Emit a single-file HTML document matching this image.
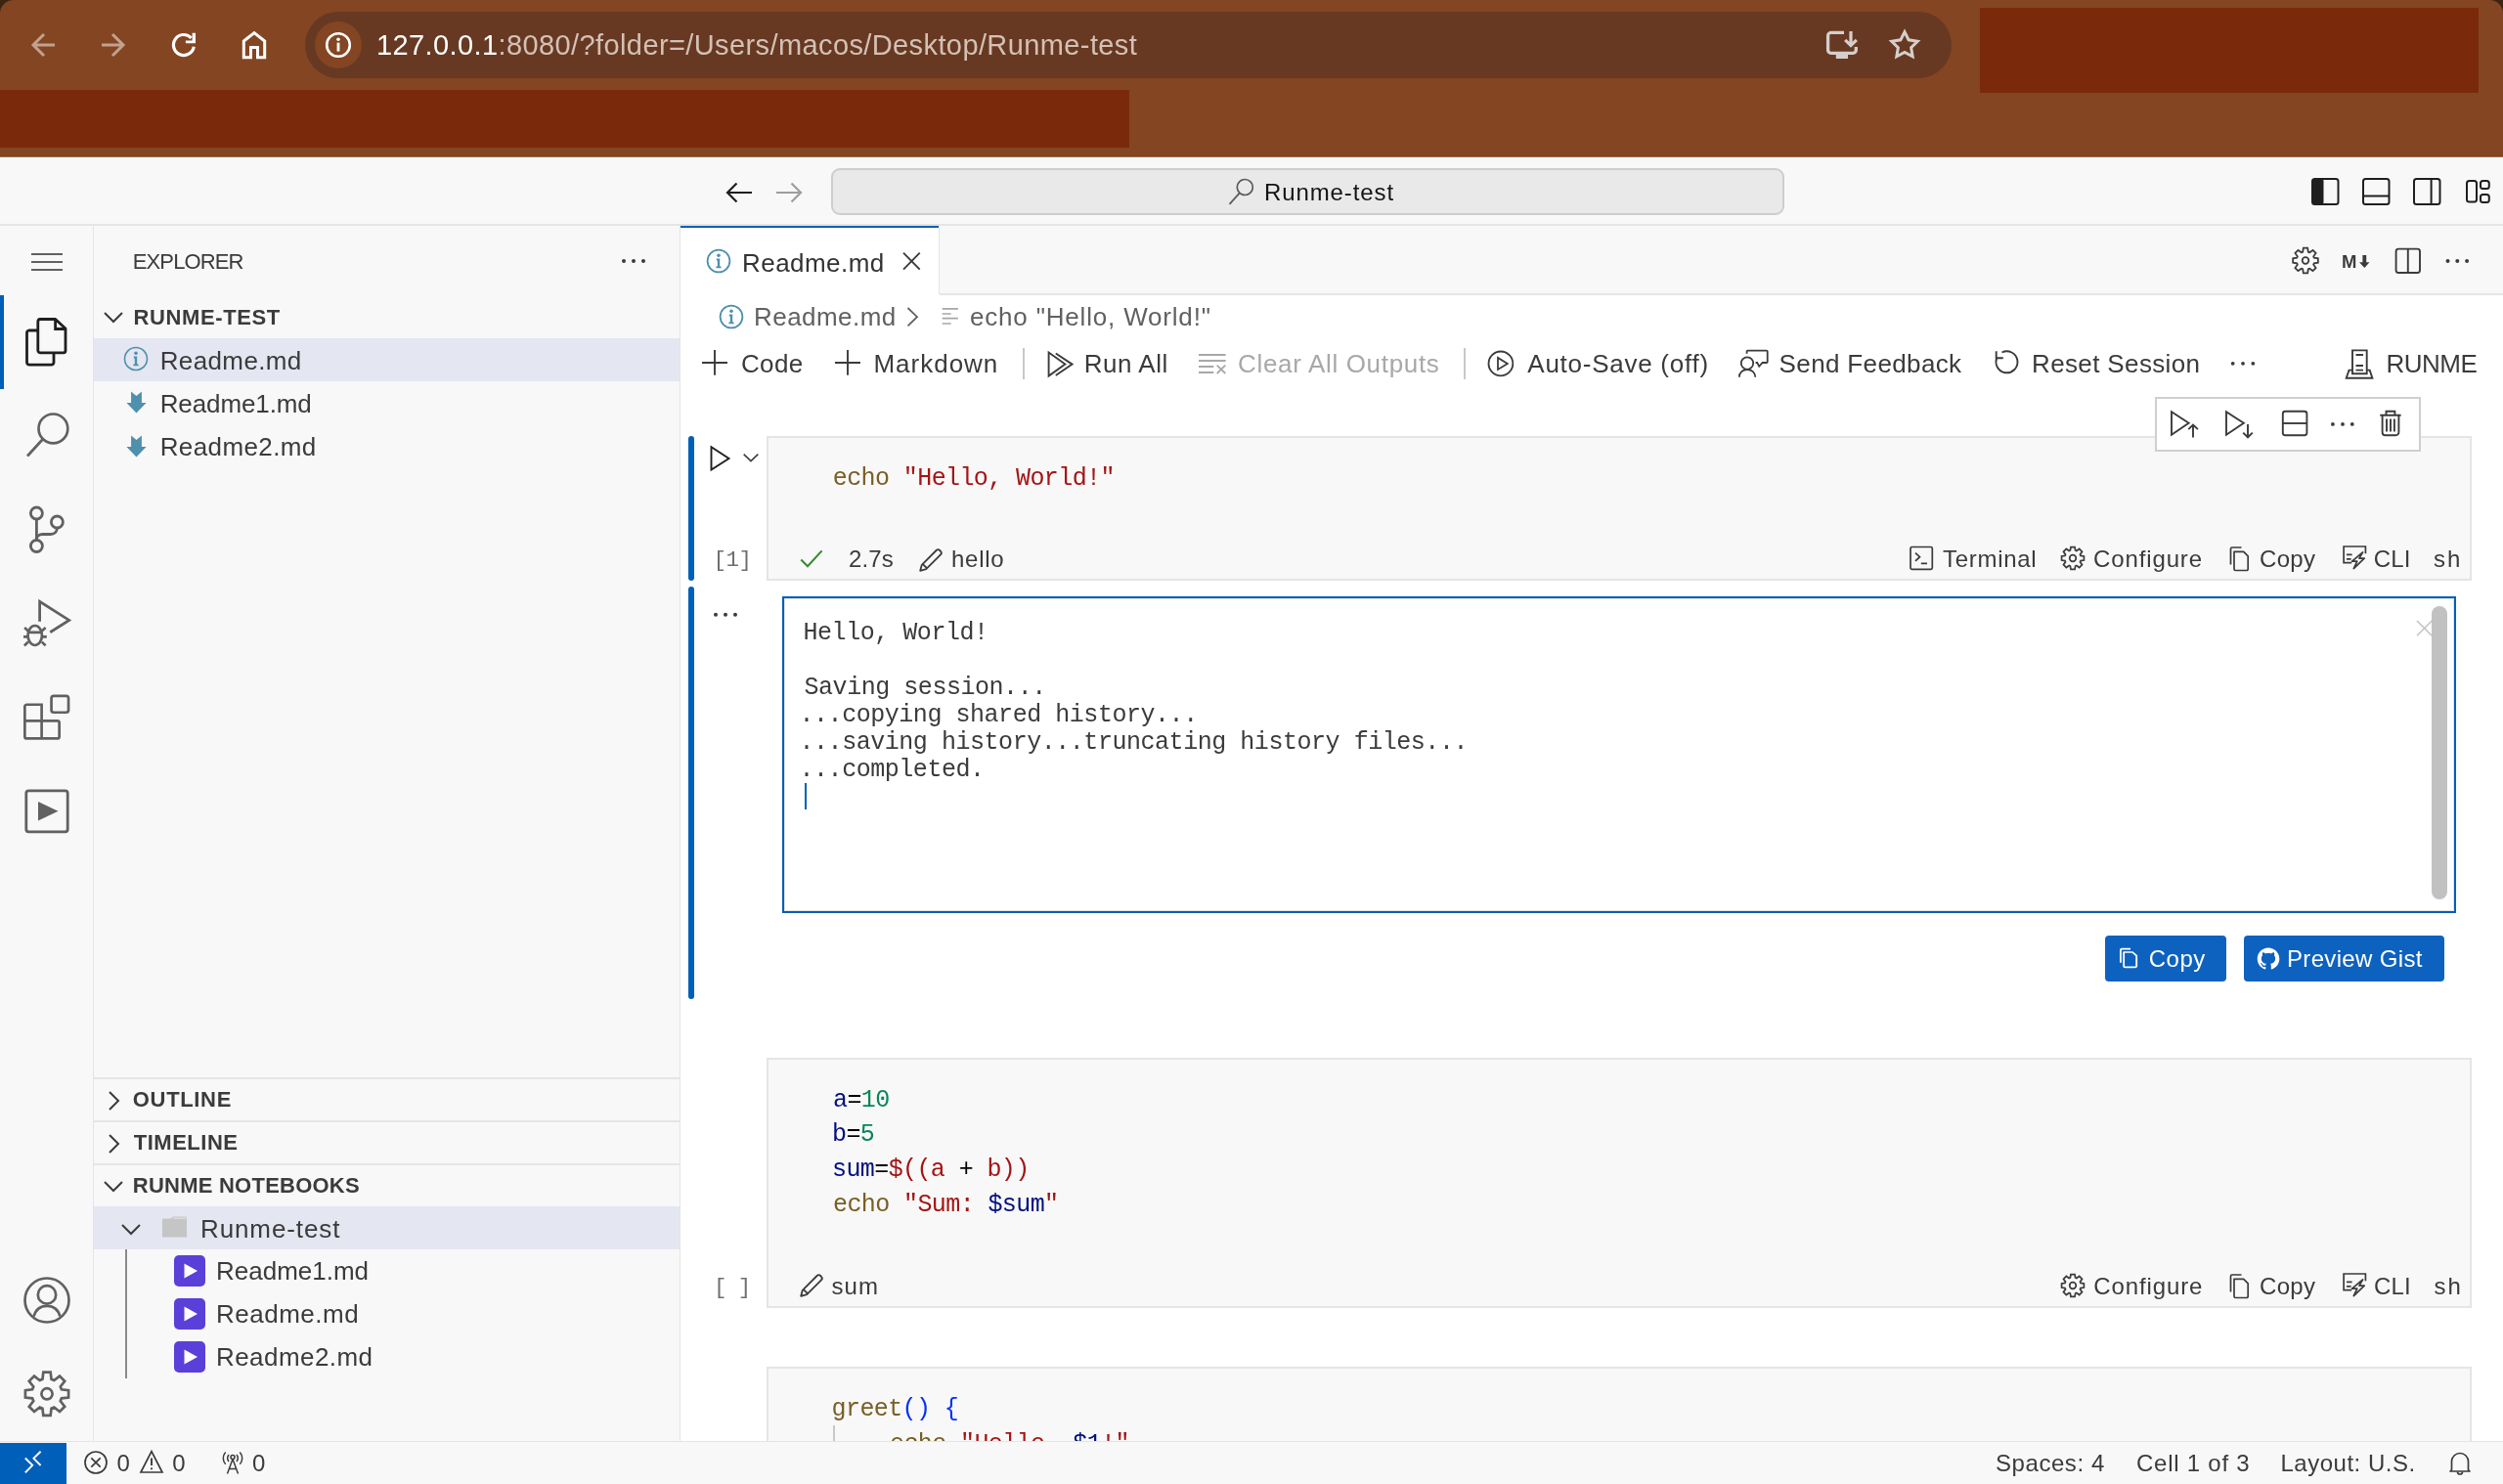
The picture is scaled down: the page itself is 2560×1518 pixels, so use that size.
<!DOCTYPE html>
<html><head><meta charset="utf-8"><style>
html,body{margin:0;padding:0;width:2560px;height:1518px;overflow:hidden;background:#fff}
#r{position:absolute;left:0;top:0;width:2560px;height:1518px;will-change:transform}
#r>div,#r>svg{position:absolute}
</style></head><body><div id="r">
<div style="left:0px;top:0px;width:2560px;height:161px;background:#3a2414;"></div>
<div style="left:0px;top:0px;width:2560px;height:161px;background:#844522;border-radius:14px 14px 0 0"></div>
<div style="left:0px;top:159px;width:2560px;height:1px;background:#7a4320;"></div>
<div style="left:0px;top:160px;width:2560px;height:1px;background:#9f6f55;"></div>
<div style="left:312px;top:12px;width:1684px;height:68px;background:#673922;border-radius:34px"></div>
<div style="left:322px;top:22px;width:48px;height:48px;background:#844522;border-radius:50%"></div>
<div style="left:2025px;top:8px;width:510px;height:87px;background:#7a2a0b;"></div>
<div style="left:0px;top:92px;width:1155px;height:59px;background:#7a2a0b;"></div>
<div style="left:0px;top:161px;width:2560px;height:70px;background:#f8f8f8;"></div>
<div style="left:0px;top:161px;width:2560px;height:1px;background:#ffffff;"></div>
<div style="left:0px;top:229px;width:2560px;height:2px;background:#e5e5e5;"></div>
<div style="left:850px;top:172px;width:975px;height:48px;background:#e9e9e9;box-sizing:border-box;border:2px solid #cdcdcd;border-radius:9px"></div>
<div style="left:0px;top:231px;width:96px;height:1244px;background:#f8f8f8;"></div>
<div style="left:95px;top:231px;width:1px;height:1244px;background:#e5e5e5;"></div>
<div style="left:0px;top:302px;width:4px;height:96px;background:#005fb8;"></div>
<div style="left:96px;top:231px;width:599px;height:1244px;background:#f8f8f8;"></div>
<div style="left:695px;top:231px;width:1px;height:1244px;background:#e5e5e5;"></div>
<div style="left:96px;top:346px;width:599px;height:44px;background:#e4e6f1;"></div>
<div style="left:96px;top:1102px;width:599px;height:2px;background:#e5e5e5;"></div>
<div style="left:96px;top:1146px;width:599px;height:2px;background:#e5e5e5;"></div>
<div style="left:96px;top:1190px;width:599px;height:2px;background:#e5e5e5;"></div>
<div style="left:96px;top:1234px;width:599px;height:44px;background:#e4e6f1;"></div>
<div style="left:128px;top:1278px;width:2px;height:132px;background:#8a8a8a;"></div>
<div style="left:696px;top:231px;width:1864px;height:1244px;background:#ffffff;"></div>
<div style="left:696px;top:231px;width:1864px;height:70px;background:#f8f8f8;"></div>
<div style="left:696px;top:300px;width:1864px;height:2px;background:#e5e5e5;"></div>
<div style="left:696px;top:231px;width:265px;height:71px;background:#ffffff;"></div>
<div style="left:696px;top:231px;width:265px;height:2px;background:#005fb8;"></div>
<div style="left:960px;top:231px;width:1px;height:70px;background:#e5e5e5;"></div>
<div style="left:0px;top:1474px;width:2560px;height:44px;background:#f8f8f8;z-index:5"></div>
<div style="left:0px;top:1474px;width:2560px;height:1px;background:#e5e5e5;z-index:5"></div>
<div style="left:0px;top:1476px;width:68px;height:42px;background:#005fb8;z-index:5"></div>
<div style="left:784px;top:446px;width:1744px;height:148px;box-sizing:border-box;background:#f8f8f8;border:2px solid #e5e5e5"></div>
<div style="left:704px;top:446px;width:6px;height:148px;background:#005fb8;border-radius:3px"></div>
<div style="left:704px;top:600px;width:6px;height:422px;background:#005fb8;border-radius:3px"></div>
<div style="left:800px;top:610px;width:1712px;height:324px;box-sizing:border-box;background:#fff;border:2px solid #005fb8"></div>
<div style="left:802px;top:612px;width:1708px;height:320px;box-sizing:border-box;border:1px solid #e3e3e3"></div>
<div style="left:2204px;top:406px;width:272px;height:56px;box-sizing:border-box;background:#fff;border:2px solid #cfcfcf"></div>
<div style="left:2487px;top:620px;width:16px;height:300px;background:#c1c1c1;border-radius:8px"></div>
<div style="left:2153px;top:957px;width:124px;height:47px;background:#0d62bf;border-radius:4px"></div>
<div style="left:2295px;top:957px;width:205px;height:47px;background:#0d62bf;border-radius:4px"></div>
<div style="left:784px;top:1082px;width:1744px;height:256px;box-sizing:border-box;background:#f8f8f8;border:2px solid #e5e5e5"></div>
<div style="left:784px;top:1398px;width:1744px;height:100px;box-sizing:border-box;background:#f8f8f8;border:2px solid #e5e5e5"></div>
<div style="left:852px;top:1458px;width:2px;height:20px;background:#c8c8c8;"></div>
<div style="left:823px;top:801px;width:2px;height:27px;background:#005fb8;"></div>
<svg style="left:28px;top:30px;" width="32" height="32" viewBox="0 0 32 32" fill="none"><path d="M6 16H28M17 5L6 16L17 27" stroke="#c1a290" stroke-width="3"/></svg>
<svg style="left:100px;top:30px;" width="32" height="32" viewBox="0 0 32 32" fill="none"><path d="M26 16H4M15 5L26 16L15 27" stroke="#c1a290" stroke-width="3"/></svg>
<svg style="left:172px;top:30px;" width="32" height="32" viewBox="0 0 32 32" fill="none"><path d="M26.3 17.8A10.5 10.5 0 1 1 23.6 8.8" stroke="#fff" stroke-width="3.2" fill="none"/><path d="M24.6 3.8H28V14.2H17.9V11.6H24.6Z" fill="#fff"/></svg>
<svg style="left:244px;top:30px;" width="32" height="32" viewBox="0 0 32 32" fill="none"><path d="M5.3 28.8V12L16 3.6L26.7 12V28.8H19.5V18.4H12.5V28.8Z" stroke="#fff" stroke-width="3" stroke-linejoin="miter" fill="none"/></svg>
<svg style="left:330px;top:30px;" width="32" height="32" viewBox="0 0 32 32" fill="none"><circle cx="16" cy="16" r="11.8" stroke="#fff" stroke-width="2.6"/><circle cx="16" cy="10.2" r="1.8" fill="#fff"/><rect x="14.6" y="13.6" width="2.8" height="9" fill="#fff"/></svg>
<svg style="left:1855px;top:20px;" width="60" height="50" viewBox="0 0 60 50" fill="none"><path d="M31 13.4H17.5A3 3 0 0 0 14.6 16.4V31.3A3 3 0 0 0 17.6 34.3H40.3A3 3 0 0 0 43.3 31.3V28" stroke="#d5cfcc" stroke-width="3.3" fill="none"/><rect x="22.8" y="34" width="12.2" height="6" fill="#d5cfcc"/><path d="M38 12V26M32.2 20.8L38 26.6L43.8 20.8" stroke="#d5cfcc" stroke-width="3.2" fill="none"/></svg>
<svg style="left:1925px;top:20px;" width="50" height="50" viewBox="0 0 50 50" fill="none"><path d="M23.00,12.60 L27.11,20.84 L36.22,22.20 L29.66,28.66 L31.17,37.75 L23.00,33.50 L14.83,37.75 L16.34,28.66 L9.78,22.20 L18.89,20.84 Z" stroke="#d5cfcc" stroke-width="3" stroke-linejoin="miter" fill="none"/></svg>
<svg style="left:738px;top:182px;" width="34" height="30" viewBox="0 0 34 30" fill="none"><path d="M6 15H31M15.5 5.5L6 15L15.5 24.5" stroke="#1f1f1f" stroke-width="2.2"/></svg>
<svg style="left:790px;top:182px;" width="34" height="30" viewBox="0 0 34 30" fill="none"><path d="M29 15H4M19.5 5.5L29 15L19.5 24.5" stroke="#9d9d9d" stroke-width="2.2"/></svg>
<svg style="left:1252px;top:178px;" width="36" height="36" viewBox="0 0 36 36" fill="none"><circle cx="21.3" cy="13.5" r="8" stroke="#5a5a5a" stroke-width="1.7"/><path d="M15.6 19.6L5.5 30.9" stroke="#5a5a5a" stroke-width="1.7"/></svg>
<svg style="left:2362px;top:180px;" width="32" height="32" viewBox="0 0 32 32" fill="none"><rect x="3" y="3" width="26.5" height="26" rx="2.5" stroke="#1f1f1f" stroke-width="2"/><rect x="3" y="3" width="11.5" height="26" rx="2" fill="#1f1f1f"/></svg>
<svg style="left:2414px;top:180px;" width="32" height="32" viewBox="0 0 32 32" fill="none"><rect x="3" y="3" width="26.5" height="26" rx="2.5" stroke="#1f1f1f" stroke-width="2"/><path d="M3 20.5H29.5" stroke="#1f1f1f" stroke-width="2"/></svg>
<svg style="left:2466px;top:180px;" width="32" height="32" viewBox="0 0 32 32" fill="none"><rect x="3" y="3" width="26.5" height="26" rx="2.5" stroke="#1f1f1f" stroke-width="2"/><path d="M20.6 3V29" stroke="#1f1f1f" stroke-width="2"/></svg>
<svg style="left:2520px;top:180px;" width="32" height="32" viewBox="0 0 32 32" fill="none"><rect x="3" y="5" width="10" height="21.5" rx="2.5" stroke="#1f1f1f" stroke-width="2"/><rect x="17" y="5" width="8.8" height="8" rx="2.5" stroke="#1f1f1f" stroke-width="2"/><rect x="17" y="19" width="8.8" height="8" rx="2.5" stroke="#1f1f1f" stroke-width="2"/></svg>
<svg style="left:28px;top:252px;" width="40" height="32" viewBox="0 0 40 32" fill="none"><path d="M4 8H36M4 16H36M4 24H36" stroke="#616161" stroke-width="2"/></svg>
<svg style="left:22px;top:322px;" width="50" height="56" viewBox="0 0 50 56" fill="none"><path d="M16.6 16H7.5A2.5 2.5 0 0 0 5.5 18.5V48.7A2.5 2.5 0 0 0 8 51.2H30.5A2.5 2.5 0 0 0 33 48.7V39" stroke="#1f1f1f" stroke-width="2.8" fill="none"/><path d="M19 4.5H34.5L45 14V36.8A2 2 0 0 1 43 38.8H19A2.5 2.5 0 0 1 16.8 36.5V6.8A2.5 2.5 0 0 1 19 4.5Z" stroke="#1f1f1f" stroke-width="2.8" fill="none"/><path d="M34.6 5V14.5H44" stroke="#1f1f1f" stroke-width="2.8" fill="none"/></svg>
<svg style="left:22px;top:418px;" width="52" height="56" viewBox="0 0 52 56" fill="none"><circle cx="32.4" cy="20.4" r="14.9" stroke="#616161" stroke-width="2.7"/><path d="M22 31L6 48.5" stroke="#616161" stroke-width="2.7"/></svg>
<svg style="left:22px;top:508px;" width="52" height="60" viewBox="0 0 52 60" fill="none"><circle cx="15.4" cy="17" r="6" stroke="#616161" stroke-width="2.8"/><circle cx="36.4" cy="26" r="6" stroke="#616161" stroke-width="2.8"/><circle cx="15.4" cy="50.5" r="6" stroke="#616161" stroke-width="2.8"/><path d="M15.4 23V44.5M15.4 44C15.4 40.5 18 38.5 21.5 38.5H29.8C33.6 38.5 36.4 36 36.4 32" stroke="#616161" stroke-width="2.8" fill="none"/></svg>
<svg style="left:22px;top:608px;" width="56" height="60" viewBox="0 0 56 60" fill="none"><path d="M18.6 27.8V7.3L48.7 26.4L29.3 38.7" stroke="#616161" stroke-width="2.8" fill="none" stroke-linejoin="miter"/><ellipse cx="13.75" cy="42" rx="7.2" ry="10" stroke="#616161" stroke-width="2.7"/><path d="M7.5 38.9H20M2 43.4H6.9M20.6 43.4H25.8M3.1 34L6.9 37.4M24.6 34L20.8 37.4M2.9 52.4L6.9 48.6M24.6 52.4L20.8 48.6" stroke="#616161" stroke-width="2.7"/></svg>
<svg style="left:20px;top:704px;" width="56" height="60" viewBox="0 0 56 60" fill="none"><path d="M5.35 18.75A2 2 0 0 1 7.35 16.75H22.6V33.4H38.65A2 2 0 0 1 40.65 35.4V49.45A2 2 0 0 1 38.65 51.45H7.35A2 2 0 0 1 5.35 49.45Z M5.35 33.4H22.6V51.45" stroke="#616161" stroke-width="2.7" fill="none"/><rect x="32.55" y="7.85" width="17.5" height="16.9" rx="2.5" stroke="#616161" stroke-width="2.7"/></svg>
<svg style="left:22px;top:804px;" width="52" height="52" viewBox="0 0 52 52" fill="none"><rect x="4.8" y="4.8" width="42.4" height="42" rx="2.5" stroke="#616161" stroke-width="2.8"/><path d="M17 16L37.5 25.8L17 35.5Z" fill="#616161"/></svg>
<svg style="left:22px;top:1304px;" width="52" height="52" viewBox="0 0 52 52" fill="none"><circle cx="26" cy="26" r="22.5" stroke="#616161" stroke-width="2.7"/><circle cx="26" cy="20.4" r="9.2" stroke="#616161" stroke-width="2.7"/><path d="M12.6 42.5C14.5 35.5 19.5 31.8 26 31.8C32.5 31.8 37.5 35.5 39.4 42.5" stroke="#616161" stroke-width="2.7" fill="none"/></svg>
<svg style="left:22px;top:1400px;" width="52" height="52" viewBox="0 0 52 52" fill="none"><path d="M21.47,10.87 L22.32,3.70 L29.68,3.70 L30.53,10.87 L33.35,12.04 L39.02,7.58 L44.22,12.78 L39.76,18.45 L40.93,21.27 L48.10,22.12 L48.10,29.48 L40.93,30.33 L39.76,33.15 L44.22,38.82 L39.02,44.02 L33.35,39.56 L30.53,40.73 L29.68,47.90 L22.32,47.90 L21.47,40.73 L18.65,39.56 L12.98,44.02 L7.78,38.82 L12.24,33.15 L11.07,30.33 L3.90,29.48 L3.90,22.12 L11.07,21.27 L12.24,18.45 L7.78,12.78 L12.98,7.58 L18.65,12.04 Z" stroke="#616161" stroke-width="2.7" fill="none" stroke-linejoin="miter"/><circle cx="26" cy="25.8" r="5.6" stroke="#616161" stroke-width="2.7"/></svg>
<svg style="left:620px;top:255px;" width="50" height="24" viewBox="0 0 50 24" fill="none"><circle cx="18" cy="12" r="2" fill="#3b3b3b"/><circle cx="28" cy="12" r="2" fill="#3b3b3b"/><circle cx="38" cy="12" r="2" fill="#3b3b3b"/></svg>
<svg style="left:104px;top:317px;" width="24" height="16" viewBox="0 0 24 16" fill="none"><path d="M3 3L12 12L21 3" stroke="#3b3b3b" stroke-width="2" fill="none"/></svg>
<svg style="left:109px;top:1114px;" width="16" height="24" viewBox="0 0 16 24" fill="none"><path d="M3 3L12 12L3 21" stroke="#3b3b3b" stroke-width="2" fill="none"/></svg>
<svg style="left:109px;top:1158px;" width="16" height="24" viewBox="0 0 16 24" fill="none"><path d="M3 3L12 12L3 21" stroke="#3b3b3b" stroke-width="2" fill="none"/></svg>
<svg style="left:104px;top:1206px;" width="24" height="16" viewBox="0 0 24 16" fill="none"><path d="M3 3L12 12L21 3" stroke="#3b3b3b" stroke-width="2" fill="none"/></svg>
<svg style="left:122px;top:1250px;" width="24" height="16" viewBox="0 0 24 16" fill="none"><path d="M3 3L12 12L21 3" stroke="#3b3b3b" stroke-width="2" fill="none"/></svg>
<svg style="left:123.4px;top:351.4px;" width="32" height="32" viewBox="0 0 32 32" fill="none"><circle cx="16" cy="16" r="11.5" stroke="#4e90ae" stroke-width="1.6"/><circle cx="16" cy="10.3" r="1.8" fill="#4e90ae"/><path d="M13.8 13.6H17.2V21.4H18.6V23.2H13.4V21.4H14.8V15.4H13.8Z" fill="#4e90ae"/></svg>
<svg style="left:128.8px;top:400.4px;" width="22" height="24" viewBox="0 0 22 24" fill="none"><path d="M5.1 0.4L10.5 5L15.9 0.4V12H20.6L10.5 22.6L0.4 12H5.1Z" fill="#4e90ae"/></svg>
<svg style="left:128.8px;top:444.6px;" width="22" height="24" viewBox="0 0 22 24" fill="none"><path d="M5.1 0.4L10.5 5L15.9 0.4V12H20.6L10.5 22.6L0.4 12H5.1Z" fill="#4e90ae"/></svg>
<svg style="left:164px;top:1242px;" width="30" height="26" viewBox="0 0 30 26" fill="none"><path d="M2 5.5A1 1 0 0 1 3 4.5H11L13 2.5H26A1 1 0 0 1 27 3.5V23.5H2Z" fill="#c5c5c5"/><path d="M13.5 4.2H26.5" stroke="#e8e8e8" stroke-width="1"/></svg>
<svg style="left:177.8px;top:1284px;" width="32" height="32" viewBox="0 0 32 32" fill="none"><rect x="0" y="0" width="32" height="32" rx="5" fill="#5b3fd9"/><path d="M10.5 8.5L24 16L10.5 23.5Z" fill="#fff"/></svg>
<svg style="left:177.8px;top:1328px;" width="32" height="32" viewBox="0 0 32 32" fill="none"><rect x="0" y="0" width="32" height="32" rx="5" fill="#5b3fd9"/><path d="M10.5 8.5L24 16L10.5 23.5Z" fill="#fff"/></svg>
<svg style="left:177.8px;top:1372px;" width="32" height="32" viewBox="0 0 32 32" fill="none"><rect x="0" y="0" width="32" height="32" rx="5" fill="#5b3fd9"/><path d="M10.5 8.5L24 16L10.5 23.5Z" fill="#fff"/></svg>
<div style="left:385.00px;top:31.65px;font:29px/29px 'Liberation Sans', sans-serif;letter-spacing:0.396px;white-space:pre;"><span style="color:#ffffff">127.0.0.1</span><span style="color:#d4c0b5">:8080/?folder=/Users/macos/Desktop/Runme-test</span></div>
<div style="left:1293.00px;top:184.68px;font:24px/24px 'Liberation Sans', sans-serif;color:#141414;letter-spacing:0.889px;white-space:pre;">Runme-test</div>
<div style="left:135.70px;top:256.88px;font:22px/22px 'Liberation Sans', sans-serif;color:#3b3b3b;letter-spacing:-0.857px;white-space:pre;">EXPLORER</div>
<div style="left:136.60px;top:313.88px;font:22px/22px 'Liberation Sans', sans-serif;font-weight:700;color:#3b3b3b;letter-spacing:0.600px;white-space:pre;">RUNME-TEST</div>
<div style="left:163.70px;top:355.69px;font:26px/26px 'Liberation Sans', sans-serif;color:#3b3b3b;letter-spacing:0.375px;white-space:pre;">Readme.md</div>
<div style="left:163.70px;top:399.69px;font:26px/26px 'Liberation Sans', sans-serif;color:#3b3b3b;letter-spacing:-0.111px;white-space:pre;">Readme1.md</div>
<div style="left:163.70px;top:443.69px;font:26px/26px 'Liberation Sans', sans-serif;color:#3b3b3b;letter-spacing:0.389px;white-space:pre;">Readme2.md</div>
<div style="left:135.80px;top:1114.38px;font:22px/22px 'Liberation Sans', sans-serif;font-weight:700;color:#3b3b3b;letter-spacing:0.667px;white-space:pre;">OUTLINE</div>
<div style="left:136.80px;top:1158.38px;font:22px/22px 'Liberation Sans', sans-serif;font-weight:700;color:#3b3b3b;letter-spacing:0.500px;white-space:pre;">TIMELINE</div>
<div style="left:135.80px;top:1202.38px;font:22px/22px 'Liberation Sans', sans-serif;font-weight:700;color:#3b3b3b;letter-spacing:0.236px;white-space:pre;">RUNME NOTEBOOKS</div>
<div style="left:205.00px;top:1243.69px;font:26px/26px 'Liberation Sans', sans-serif;color:#3b3b3b;letter-spacing:0.889px;white-space:pre;">Runme-test</div>
<div style="left:221.00px;top:1287.39px;font:26px/26px 'Liberation Sans', sans-serif;color:#3b3b3b;letter-spacing:0.000px;white-space:pre;">Readme1.md</div>
<div style="left:221.00px;top:1331.49px;font:26px/26px 'Liberation Sans', sans-serif;color:#3b3b3b;letter-spacing:0.500px;white-space:pre;">Readme.md</div>
<div style="left:221.00px;top:1375.49px;font:26px/26px 'Liberation Sans', sans-serif;color:#3b3b3b;letter-spacing:0.444px;white-space:pre;">Readme2.md</div>
<div style="left:759.00px;top:255.69px;font:26px/26px 'Liberation Sans', sans-serif;color:#333333;letter-spacing:0.462px;white-space:pre;">Readme.md</div>
<div style="left:771.00px;top:310.99px;font:26px/26px 'Liberation Sans', sans-serif;color:#616161;letter-spacing:0.462px;white-space:pre;">Readme.md</div>
<div style="left:992.00px;top:310.99px;font:26px/26px 'Liberation Sans', sans-serif;color:#616161;letter-spacing:0.816px;white-space:pre;">echo "Hello, World!"</div>
<div style="left:758.00px;top:359.39px;font:26px/26px 'Liberation Sans', sans-serif;color:#3b3b3b;letter-spacing:0.333px;white-space:pre;">Code</div>
<div style="left:893.40px;top:359.39px;font:26px/26px 'Liberation Sans', sans-serif;color:#3b3b3b;letter-spacing:1.000px;white-space:pre;">Markdown</div>
<div style="left:1108.70px;top:359.39px;font:26px/26px 'Liberation Sans', sans-serif;color:#3b3b3b;letter-spacing:0.550px;white-space:pre;">Run All</div>
<div style="left:1266.00px;top:359.39px;font:26px/26px 'Liberation Sans', sans-serif;color:#a8a8a8;letter-spacing:0.669px;white-space:pre;">Clear All Outputs</div>
<div style="left:1562.30px;top:359.39px;font:26px/26px 'Liberation Sans', sans-serif;color:#3b3b3b;letter-spacing:0.743px;white-space:pre;">Auto-Save (off)</div>
<div style="left:1819.60px;top:359.39px;font:26px/26px 'Liberation Sans', sans-serif;color:#3b3b3b;letter-spacing:0.367px;white-space:pre;">Send Feedback</div>
<div style="left:2078.00px;top:359.39px;font:26px/26px 'Liberation Sans', sans-serif;color:#3b3b3b;letter-spacing:0.367px;white-space:pre;">Reset Session</div>
<div style="left:2440.40px;top:359.39px;font:26px/26px 'Liberation Sans', sans-serif;color:#3b3b3b;letter-spacing:-0.450px;white-space:pre;">RUNME</div>
<div style="left:851.80px;top:477.14px;font:25px/25px 'Liberation Mono', monospace;letter-spacing:-0.600px;white-space:pre;"><span style="color:#795e26">echo</span><span style="color:#3b3b3b"> </span><span style="color:#a31515">"Hello, World!"</span></div>
<div style="left:729.40px;top:562.25px;font:22.5px/22.5px 'Liberation Mono', monospace;color:#6f6f6f;letter-spacing:-0.500px;white-space:pre;">[1]</div>
<div style="left:868.00px;top:559.68px;font:24px/24px 'Liberation Sans', sans-serif;color:#3b3b3b;letter-spacing:0.167px;white-space:pre;">2.7s</div>
<div style="left:973.00px;top:559.68px;font:24px/24px 'Liberation Sans', sans-serif;color:#3b3b3b;letter-spacing:0.750px;white-space:pre;">hello</div>
<div style="left:1987.00px;top:559.68px;font:24px/24px 'Liberation Sans', sans-serif;color:#3b3b3b;letter-spacing:0.714px;white-space:pre;">Terminal</div>
<div style="left:2141.00px;top:559.68px;font:24px/24px 'Liberation Sans', sans-serif;color:#3b3b3b;letter-spacing:0.875px;white-space:pre;">Configure</div>
<div style="left:2311.00px;top:559.68px;font:24px/24px 'Liberation Sans', sans-serif;color:#3b3b3b;letter-spacing:0.333px;white-space:pre;">Copy</div>
<div style="left:2427.70px;top:559.68px;font:24px/24px 'Liberation Sans', sans-serif;color:#3b3b3b;letter-spacing:0.150px;white-space:pre;">CLI</div>
<div style="left:2489.00px;top:559.68px;font:24px/24px 'Liberation Sans', sans-serif;color:#3b3b3b;letter-spacing:2.000px;white-space:pre;">sh</div>
<div style="left:821.50px;top:635.14px;font:25px/25px 'Liberation Mono', monospace;color:#3b3b3b;letter-spacing:-0.460px;white-space:pre;">Hello, World!</div>
<div style="left:822.50px;top:690.84px;font:25px/25px 'Liberation Mono', monospace;color:#3b3b3b;letter-spacing:-0.460px;white-space:pre;">Saving session...</div>
<div style="left:817.50px;top:718.74px;font:25px/25px 'Liberation Mono', monospace;color:#3b3b3b;letter-spacing:-0.460px;white-space:pre;">...copying shared history...</div>
<div style="left:817.50px;top:746.64px;font:25px/25px 'Liberation Mono', monospace;color:#3b3b3b;letter-spacing:-0.460px;white-space:pre;">...saving history...truncating history files...</div>
<div style="left:817.50px;top:774.54px;font:25px/25px 'Liberation Mono', monospace;color:#3b3b3b;letter-spacing:-0.460px;white-space:pre;">...completed.</div>
<div style="left:2197.70px;top:969.18px;font:24px/24px 'Liberation Sans', sans-serif;color:#ffffff;letter-spacing:0.533px;white-space:pre;">Copy</div>
<div style="left:2339.00px;top:969.18px;font:24px/24px 'Liberation Sans', sans-serif;color:#ffffff;letter-spacing:0.336px;white-space:pre;">Preview Gist</div>
<div style="left:852.00px;top:1112.54px;font:25px/25px 'Liberation Mono', monospace;letter-spacing:-0.600px;white-space:pre;"><span style="color:#001080">a</span><span style="color:#000000">=</span><span style="color:#098658">10</span></div>
<div style="left:851.00px;top:1148.34px;font:25px/25px 'Liberation Mono', monospace;letter-spacing:-0.600px;white-space:pre;"><span style="color:#001080">b</span><span style="color:#000000">=</span><span style="color:#098658">5</span></div>
<div style="left:851.00px;top:1184.14px;font:25px/25px 'Liberation Mono', monospace;letter-spacing:-0.600px;white-space:pre;"><span style="color:#001080">sum</span><span style="color:#000000">=</span><span style="color:#a31515">$((a</span><span style="color:#000000"> + </span><span style="color:#a31515">b))</span></div>
<div style="left:852.00px;top:1220.04px;font:25px/25px 'Liberation Mono', monospace;letter-spacing:-0.600px;white-space:pre;"><span style="color:#795e26">echo</span><span style="color:#3b3b3b"> </span><span style="color:#a31515">"Sum: </span><span style="color:#001080">$sum</span><span style="color:#a31515">"</span></div>
<div style="left:730.00px;top:1306.25px;font:22.5px/22.5px 'Liberation Mono', monospace;color:#6f6f6f;letter-spacing:-1.100px;white-space:pre;">[ ]</div>
<div style="left:850.60px;top:1303.68px;font:24px/24px 'Liberation Sans', sans-serif;color:#3b3b3b;letter-spacing:1.000px;white-space:pre;">sum</div>
<div style="left:2141.30px;top:1303.68px;font:24px/24px 'Liberation Sans', sans-serif;color:#3b3b3b;letter-spacing:0.875px;white-space:pre;">Configure</div>
<div style="left:2311.00px;top:1303.68px;font:24px/24px 'Liberation Sans', sans-serif;color:#3b3b3b;letter-spacing:0.333px;white-space:pre;">Copy</div>
<div style="left:2428.00px;top:1303.68px;font:24px/24px 'Liberation Sans', sans-serif;color:#3b3b3b;letter-spacing:0.150px;white-space:pre;">CLI</div>
<div style="left:2489.40px;top:1303.68px;font:24px/24px 'Liberation Sans', sans-serif;color:#3b3b3b;letter-spacing:2.000px;white-space:pre;">sh</div>
<div style="left:850.60px;top:1429.34px;font:25px/25px 'Liberation Mono', monospace;letter-spacing:-0.600px;white-space:pre;"><span style="color:#795e26">greet</span><span style="color:#0431fa">()</span><span style="color:#3b3b3b"> </span><span style="color:#0431fa">{</span></div>
<div style="left:910.00px;top:1465.14px;font:25px/25px 'Liberation Mono', monospace;letter-spacing:-0.600px;white-space:pre;"><span style="color:#795e26">echo</span><span style="color:#3b3b3b"> </span><span style="color:#a31515">"Hello, </span><span style="color:#001080">$1</span><span style="color:#a31515">!"</span></div>
<div style="left:119.40px;top:1484.68px;font:24px/24px 'Liberation Sans', sans-serif;color:#3b3b3b;letter-spacing:0.000px;white-space:pre;z-index:6">0</div>
<div style="left:176.20px;top:1484.68px;font:24px/24px 'Liberation Sans', sans-serif;color:#3b3b3b;letter-spacing:0.000px;white-space:pre;z-index:6">0</div>
<div style="left:258.00px;top:1484.68px;font:24px/24px 'Liberation Sans', sans-serif;color:#3b3b3b;letter-spacing:0.000px;white-space:pre;z-index:6">0</div>
<div style="left:2041.00px;top:1484.98px;font:24px/24px 'Liberation Sans', sans-serif;color:#3b3b3b;letter-spacing:0.562px;white-space:pre;z-index:6">Spaces: 4</div>
<div style="left:2185.00px;top:1484.98px;font:24px/24px 'Liberation Sans', sans-serif;color:#3b3b3b;letter-spacing:0.750px;white-space:pre;z-index:6">Cell 1 of 3</div>
<div style="left:2332.50px;top:1484.98px;font:24px/24px 'Liberation Sans', sans-serif;color:#3b3b3b;letter-spacing:0.500px;white-space:pre;z-index:6">Layout: U.S.</div>
<svg style="left:719.4px;top:250.60000000000002px;" width="32" height="32" viewBox="0 0 32 32" fill="none"><circle cx="16" cy="16" r="11.4" stroke="#4e90ae" stroke-width="1.8"/><circle cx="16" cy="10.3" r="1.8" fill="#4e90ae"/><path d="M13.8 13.6H17.2V21.4H18.6V23.2H13.4V21.4H14.8V15.4H13.8Z" fill="#4e90ae"/></svg>
<svg style="left:916px;top:252px;" width="32" height="30" viewBox="0 0 32 30" fill="none"><path d="M8 6.6L24.7 23.6M24.7 6.6L8 23.6" stroke="#3b3b3b" stroke-width="1.9"/></svg>
<svg style="left:731.6px;top:307.5px;" width="32" height="32" viewBox="0 0 32 32" fill="none"><circle cx="16" cy="16" r="11.4" stroke="#4e90ae" stroke-width="1.8"/><circle cx="16" cy="10.3" r="1.8" fill="#4e90ae"/><path d="M13.8 13.6H17.2V21.4H18.6V23.2H13.4V21.4H14.8V15.4H13.8Z" fill="#4e90ae"/></svg>
<svg style="left:922px;top:310px;" width="22" height="28" viewBox="0 0 22 28" fill="none"><path d="M6.5 5L16 14.2L6.5 23.4" stroke="#616161" stroke-width="1.8" fill="none"/></svg>
<svg style="left:960px;top:310px;" width="24" height="26" viewBox="0 0 24 26" fill="none"><path d="M3.7 5.8H19.9M3.7 11H12.7M3.7 15.7H19.9M3.7 21H12.7" stroke="#a6a6a6" stroke-width="1.7"/></svg>
<svg style="left:2340px;top:250px;" width="36" height="36" viewBox="0 0 36 36" fill="none"><path d="M15.16,7.75 L15.87,3.68 L20.13,3.68 L20.84,7.75 L22.18,8.30 L25.56,5.92 L28.58,8.94 L26.20,12.32 L26.75,13.66 L30.82,14.37 L30.82,18.63 L26.75,19.34 L26.20,20.68 L28.58,24.06 L25.56,27.08 L22.18,24.70 L20.84,25.25 L20.13,29.32 L15.87,29.32 L15.16,25.25 L13.82,24.70 L10.44,27.08 L7.42,24.06 L9.80,20.68 L9.25,19.34 L5.18,18.63 L5.18,14.37 L9.25,13.66 L9.80,12.32 L7.42,8.94 L10.44,5.92 L13.82,8.30 Z" stroke="#3b3b3b" stroke-width="1.8" fill="none"/><circle cx="18" cy="16.5" r="3.3" stroke="#3b3b3b" stroke-width="1.8"/></svg>
<div style="left:2394.90px;top:258.84px;font:18.5px/18.5px 'Liberation Sans', sans-serif;font-weight:700;color:#3b3b3b;letter-spacing:0.000px;white-space:pre;">M</div>
<svg style="left:2410px;top:258px;" width="16" height="18" viewBox="0 0 16 18" fill="none"><path d="M6.4 3H10.2V10.3H13.5L8.3 16L3 10.3H6.4Z" fill="#3b3b3b"/></svg>
<svg style="left:2446px;top:250px;" width="34" height="34" viewBox="0 0 34 34" fill="none"><rect x="4.6" y="4.6" width="24.4" height="24.4" rx="2.5" stroke="#3b3b3b" stroke-width="1.9"/><path d="M16.8 4.6V29" stroke="#3b3b3b" stroke-width="1.9"/></svg>
<svg style="left:2496px;top:257px;" width="34" height="20" viewBox="0 0 34 20" fill="none"><circle cx="7.5" cy="10" r="2" fill="#3b3b3b"/><circle cx="17.3" cy="10" r="2" fill="#3b3b3b"/><circle cx="27.1" cy="10" r="2" fill="#3b3b3b"/></svg>
<svg style="left:714px;top:354px;" width="34" height="34" viewBox="0 0 34 34" fill="none"><path d="M17 4V29.8M4 17H30" stroke="#3b3b3b" stroke-width="1.9"/></svg>
<svg style="left:850px;top:354px;" width="34" height="34" viewBox="0 0 34 34" fill="none"><path d="M17 4V29.8M4 17H30" stroke="#3b3b3b" stroke-width="1.9"/></svg>
<div style="left:1046px;top:356px;width:2px;height:32px;background:#c8c8c8;"></div>
<div style="left:1497px;top:356px;width:2px;height:32px;background:#c8c8c8;"></div>
<svg style="left:1066px;top:354px;" width="36" height="36" viewBox="0 0 36 36" fill="none"><path d="M6.6 6.6V30.6L23.4 18.6Z" stroke="#3b3b3b" stroke-width="1.9" stroke-linejoin="miter" fill="none"/><path d="M13.8 7.5L30.6 18.6L13.8 30" stroke="#3b3b3b" stroke-width="1.9" fill="none"/></svg>
<svg style="left:1222px;top:356px;" width="36" height="32" viewBox="0 0 36 32" fill="none"><path d="M4 7H31.6M4 13H31.6M4 19H19.3M4 25H19.3M22.7 17.7L31.3 26M31.3 17.7L22.7 26" stroke="#a8a8a8" stroke-width="1.8"/></svg>
<svg style="left:1518px;top:355px;" width="34" height="34" viewBox="0 0 34 34" fill="none"><circle cx="16.9" cy="16.9" r="12.4" stroke="#3b3b3b" stroke-width="1.8"/><path d="M14 10.9V23L23.8 16.9Z" stroke="#3b3b3b" stroke-width="1.8" fill="none" stroke-linejoin="miter"/></svg>
<svg style="left:1774px;top:354px;" width="40" height="36" viewBox="0 0 40 36" fill="none"><circle cx="13" cy="17.6" r="6.2" stroke="#3b3b3b" stroke-width="1.8"/><path d="M4.9 31.7C4.9 27 8.5 24 13 24C17.5 24 21.3 27 21.3 31.7" stroke="#3b3b3b" stroke-width="1.8" fill="none"/><path d="M12.6 7.8V5.6A1 1 0 0 1 13.6 4.6H32.7A1 1 0 0 1 33.7 5.6V16A1 1 0 0 1 32.7 17H28.6L25.2 20.8L23.2 17H21.6" stroke="#3b3b3b" stroke-width="1.8" fill="none"/></svg>
<svg style="left:2036px;top:354px;" width="36" height="36" viewBox="0 0 36 36" fill="none"><path d="M11.5 6.5A11 11 0 1 1 6.6 11.5" stroke="#3b3b3b" stroke-width="1.9" fill="none"/><path d="M5.7 5.2V12.3H12.8" stroke="#3b3b3b" stroke-width="1.9" fill="none"/></svg>
<svg style="left:2278px;top:362px;" width="34" height="20" viewBox="0 0 34 20" fill="none"><circle cx="5.7" cy="9.8" r="1.9" fill="#3b3b3b"/><circle cx="16" cy="9.8" r="1.9" fill="#3b3b3b"/><circle cx="26.3" cy="9.8" r="1.9" fill="#3b3b3b"/></svg>
<svg style="left:2396px;top:354px;" width="34" height="36" viewBox="0 0 34 36" fill="none"><path d="M10 4.4H24.7V28.3H10Z" stroke="#3b3b3b" stroke-width="1.9" fill="none"/><path d="M13.5 9H21M13.5 20H21M13.5 24.6H21" stroke="#3b3b3b" stroke-width="1.9"/><path d="M10 24.6H6.5L3.7 32.8H30.4L27.7 24.6H24.7" stroke="#3b3b3b" stroke-width="1.9" fill="none"/></svg>
<svg style="left:2214px;top:416px;" width="40" height="36" viewBox="0 0 40 36" fill="none"><path d="M7 5.3V28.7L24.6 16.7Z" stroke="#3b3b3b" stroke-width="1.9" fill="none" stroke-linejoin="miter"/><path d="M29 31.5V19M24.3 23.1L29 18.5L33.9 23.1" stroke="#3b3b3b" stroke-width="1.9" fill="none"/></svg>
<svg style="left:2270px;top:416px;" width="40" height="36" viewBox="0 0 40 36" fill="none"><path d="M7 5.3V28.7L24.9 16.7Z" stroke="#3b3b3b" stroke-width="1.9" fill="none" stroke-linejoin="miter"/><path d="M29 18V31.3M24.2 26.6L29 31.3L33.8 26.6" stroke="#3b3b3b" stroke-width="1.9" fill="none"/></svg>
<svg style="left:2330px;top:416px;" width="34" height="34" viewBox="0 0 34 34" fill="none"><rect x="4.8" y="4.7" width="24.6" height="24.6" rx="2.5" stroke="#3b3b3b" stroke-width="1.9"/><path d="M4.8 17H29.4" stroke="#3b3b3b" stroke-width="1.9"/></svg>
<svg style="left:2380px;top:424px;" width="32" height="20" viewBox="0 0 32 20" fill="none"><circle cx="5.9" cy="9.9" r="1.9" fill="#3b3b3b"/><circle cx="16" cy="9.9" r="1.9" fill="#3b3b3b"/><circle cx="25.8" cy="9.9" r="1.9" fill="#3b3b3b"/></svg>
<svg style="left:2430px;top:416px;" width="30" height="34" viewBox="0 0 30 34" fill="none"><path d="M4.3 8.8H25.6M10.5 8.8V4.7H19.4V8.8M6.6 8.8V26.3A3 3 0 0 0 9.6 29.3H20.4A3 3 0 0 0 23.4 26.3V8.8M11 12.5V25.4M15 12.5V25.4M18.9 12.5V25.4" stroke="#3b3b3b" stroke-width="1.9" fill="none"/></svg>
<svg style="left:720px;top:452px;" width="32" height="34" viewBox="0 0 32 34" fill="none"><path d="M7.5 5.3V28.6L25.5 17Z" stroke="#1f1f1f" stroke-width="1.9" fill="none" stroke-linejoin="miter"/></svg>
<svg style="left:756px;top:460px;" width="24" height="16" viewBox="0 0 24 16" fill="none"><path d="M4.7 4.7L12 11.6L19.3 4.7" stroke="#3b3b3b" stroke-width="1.6" fill="none"/></svg>
<svg style="left:720px;top:620px;" width="40" height="16" viewBox="0 0 40 16" fill="none"><circle cx="12" cy="8.8" r="2" fill="#3b3b3b"/><circle cx="22" cy="8.8" r="2" fill="#3b3b3b"/><circle cx="32" cy="8.8" r="2" fill="#3b3b3b"/></svg>
<svg style="left:814px;top:556px;" width="32" height="30" viewBox="0 0 32 30" fill="none"><path d="M5.3 16.6L12 23.3L26.6 7.4" stroke="#388a34" stroke-width="2.1" fill="none"/></svg>
<svg style="left:936px;top:557px;" width="30" height="30" viewBox="0 0 30 30" fill="none"><path d="M5.2 26.8L6.8 20.8L21.6 6A2.6 2.6 0 0 1 25.2 6L26 6.8A2.6 2.6 0 0 1 26 10.4L11.2 25.2Z M7.6 19.8L12.2 24.4" stroke="#3b3b3b" stroke-width="1.8" fill="none" stroke-linejoin="round"/></svg>
<svg style="left:814px;top:1299px;" width="30" height="30" viewBox="0 0 30 30" fill="none"><path d="M5.2 26.8L6.8 20.8L21.6 6A2.6 2.6 0 0 1 25.2 6L26 6.8A2.6 2.6 0 0 1 26 10.4L11.2 25.2Z M7.6 19.8L12.2 24.4" stroke="#3b3b3b" stroke-width="1.8" fill="none" stroke-linejoin="round"/></svg>
<svg style="left:1950px;top:556px;" width="30" height="30" viewBox="0 0 30 30" fill="none"><rect x="4" y="3.5" width="22.3" height="22.8" rx="1.5" stroke="#3b3b3b" stroke-width="1.7"/><path d="M9 9.6L13.5 13.7L9 17.8M14.8 20.4H21" stroke="#3b3b3b" stroke-width="1.7" fill="none"/></svg>
<svg style="left:2105px;top:556px;" width="30" height="30" viewBox="0 0 30 30" fill="none"><path d="M12.40,7.01 L12.96,3.58 L17.04,3.58 L17.60,7.01 L18.81,7.52 L21.63,5.48 L24.52,8.37 L22.48,11.19 L22.99,12.40 L26.42,12.96 L26.42,17.04 L22.99,17.60 L22.48,18.81 L24.52,21.63 L21.63,24.52 L18.81,22.48 L17.60,22.99 L17.04,26.42 L12.96,26.42 L12.40,22.99 L11.19,22.48 L8.37,24.52 L5.48,21.63 L7.52,18.81 L7.01,17.60 L3.58,17.04 L3.58,12.96 L7.01,12.40 L7.52,11.19 L5.48,8.37 L8.37,5.48 L11.19,7.52 Z" stroke="#3b3b3b" stroke-width="1.7" fill="none"/><circle cx="15" cy="15" r="3.3" stroke="#3b3b3b" stroke-width="1.7"/></svg>
<svg style="left:2105px;top:1300px;" width="30" height="30" viewBox="0 0 30 30" fill="none"><path d="M12.40,7.01 L12.96,3.58 L17.04,3.58 L17.60,7.01 L18.81,7.52 L21.63,5.48 L24.52,8.37 L22.48,11.19 L22.99,12.40 L26.42,12.96 L26.42,17.04 L22.99,17.60 L22.48,18.81 L24.52,21.63 L21.63,24.52 L18.81,22.48 L17.60,22.99 L17.04,26.42 L12.96,26.42 L12.40,22.99 L11.19,22.48 L8.37,24.52 L5.48,21.63 L7.52,18.81 L7.01,17.60 L3.58,17.04 L3.58,12.96 L7.01,12.40 L7.52,11.19 L5.48,8.37 L8.37,5.48 L11.19,7.52 Z" stroke="#3b3b3b" stroke-width="1.7" fill="none"/><circle cx="15" cy="15" r="3.3" stroke="#3b3b3b" stroke-width="1.7"/></svg>
<svg style="left:2275px;top:556px;" width="30" height="30" viewBox="0 0 30 30" fill="none"><path d="M6.5 21.6V5.5A1.5 1.5 0 0 1 8 4H17.5" stroke="#3b3b3b" stroke-width="1.7" fill="none"/><path d="M10 8.3H19.7L24.2 12.8V26A1.5 1.5 0 0 1 22.7 27.5H11.5A1.5 1.5 0 0 1 10 26Z" stroke="#3b3b3b" stroke-width="1.7" fill="none" stroke-linejoin="round"/></svg>
<svg style="left:2275px;top:1300px;" width="30" height="30" viewBox="0 0 30 30" fill="none"><path d="M6.5 21.6V5.5A1.5 1.5 0 0 1 8 4H17.5" stroke="#3b3b3b" stroke-width="1.7" fill="none"/><path d="M10 8.3H19.7L24.2 12.8V26A1.5 1.5 0 0 1 22.7 27.5H11.5A1.5 1.5 0 0 1 10 26Z" stroke="#3b3b3b" stroke-width="1.7" fill="none" stroke-linejoin="round"/></svg>
<svg style="left:2393px;top:556px;" width="30" height="30" viewBox="0 0 30 30" fill="none"><path d="M12.2 19.6H4.1V3H26.4V10.3" stroke="#3b3b3b" stroke-width="1.7" fill="none"/><path d="M7 11.3H12.6M7 15.8H11.6" stroke="#3b3b3b" stroke-width="1.7"/><path d="M23.6 8.9L12.6 18.2H17.8L14.3 25.6L25.2 15.2H20L23.6 8.9Z" stroke="#3b3b3b" stroke-width="1.7" fill="none" stroke-linejoin="round"/></svg>
<svg style="left:2393px;top:1300px;" width="30" height="30" viewBox="0 0 30 30" fill="none"><path d="M12.2 19.6H4.1V3H26.4V10.3" stroke="#3b3b3b" stroke-width="1.7" fill="none"/><path d="M7 11.3H12.6M7 15.8H11.6" stroke="#3b3b3b" stroke-width="1.7"/><path d="M23.6 8.9L12.6 18.2H17.8L14.3 25.6L25.2 15.2H20L23.6 8.9Z" stroke="#3b3b3b" stroke-width="1.7" fill="none" stroke-linejoin="round"/></svg>
<svg style="left:2466px;top:629px;" width="30" height="30" viewBox="0 0 30 30" fill="none"><path d="M6 6L21.2 21.2M21.2 6L6 21.2" stroke="#c4c4c4" stroke-width="1.6"/></svg>
<svg style="left:2164px;top:966px;" width="26" height="28" viewBox="0 0 26 28" fill="none"><g transform="translate(-1.06,1.4) scale(0.92,0.8)"><path d="M6.5 21.6V5.5A1.5 1.5 0 0 1 8 4H17.5" stroke="#fff" stroke-width="2" fill="none"/><path d="M10 8.3H19.7L24.2 12.8V26A1.5 1.5 0 0 1 22.7 27.5H11.5A1.5 1.5 0 0 1 10 26Z" stroke="#fff" stroke-width="2" fill="none" stroke-linejoin="round"/></g></svg>
<svg style="left:2304px;top:965px;" width="32" height="32" viewBox="0 0 32 32" fill="none"><path transform="translate(1.6,1.4) scale(0.9)" fill="#ffffff" d="M16 3.5C9.1 3.5 3.5 9.1 3.5 16c0 5.5 3.6 10.2 8.6 11.9.6.1.9-.3.9-.6v-2.2c-3.5.8-4.2-1.5-4.2-1.5-.6-1.4-1.4-1.8-1.4-1.8-1.1-.8.1-.8.1-.8 1.3.1 1.9 1.3 1.9 1.3 1.1 1.9 2.9 1.4 3.6 1 .1-.8.4-1.4.8-1.7-2.8-.3-5.7-1.4-5.7-6.2 0-1.4.5-2.5 1.3-3.4-.1-.3-.6-1.6.1-3.3 0 0 1.1-.3 3.4 1.3 1-.3 2.1-.4 3.1-.4s2.1.1 3.1.4c2.4-1.6 3.4-1.3 3.4-1.3.7 1.7.3 3 .1 3.3.8.9 1.3 2 1.3 3.4 0 4.8-2.9 5.9-5.7 6.2.4.4.9 1.1.9 2.3v3.4c0 .3.2.7.9.6 5-1.7 8.6-6.4 8.6-11.9C28.5 9.1 22.9 3.5 16 3.5z"/></svg>
<svg style="left:14px;top:1478px;z-index:6" width="40" height="38" viewBox="0 0 40 38" fill="none"><path d="M11.8 13.5L19.2 20.8L11.8 28.4M27.6 6.7L20.4 13.8L27.6 21" stroke="#ffffff" stroke-width="1.9" fill="none"/></svg>
<svg style="left:82px;top:1480px;z-index:6" width="32" height="32" viewBox="0 0 32 32" fill="none"><circle cx="16" cy="16" r="11" stroke="#3b3b3b" stroke-width="1.7"/><path d="M11.3 11.3L20.7 20.7M20.7 11.3L11.3 20.7" stroke="#3b3b3b" stroke-width="1.7"/></svg>
<svg style="left:139px;top:1480px;z-index:6" width="32" height="32" viewBox="0 0 32 32" fill="none"><path d="M16 4.6L27 26H5Z" stroke="#3b3b3b" stroke-width="1.7" fill="none" stroke-linejoin="miter"/><path d="M16 11.5V19" stroke="#3b3b3b" stroke-width="1.9"/><circle cx="16" cy="22.3" r="1.1" fill="#3b3b3b"/></svg>
<svg style="left:222px;top:1480px;z-index:6" width="32" height="32" viewBox="0 0 32 32" fill="none"><path d="M8.7 5.5C5.5 9 5.5 14.3 8.7 17.8M12 8C10.5 10 10.5 13 12 15M23.3 5.5C26.5 9 26.5 14.3 23.3 17.8M20 8C21.5 10 21.5 13 20 15" stroke="#3b3b3b" stroke-width="1.5" fill="none"/><circle cx="16" cy="10.6" r="2" stroke="#3b3b3b" stroke-width="1.5"/><path d="M16 12.6L10.5 27.6M16 12.6L21.5 27.6M12.5 22.5H19.5" stroke="#3b3b3b" stroke-width="1.5"/></svg>
<svg style="left:2500px;top:1480px;z-index:6" width="32" height="32" viewBox="0 0 32 32" fill="none"><path d="M7.5 23.5V15A8.5 8.5 0 0 1 24.5 15V23.5L26 25H6Z" stroke="#3b3b3b" stroke-width="1.7" fill="none" stroke-linejoin="round"/><path d="M13.5 25.5A2.5 2.5 0 0 0 18.5 25.5" stroke="#3b3b3b" stroke-width="1.7" fill="none"/></svg>
</div></body></html>
